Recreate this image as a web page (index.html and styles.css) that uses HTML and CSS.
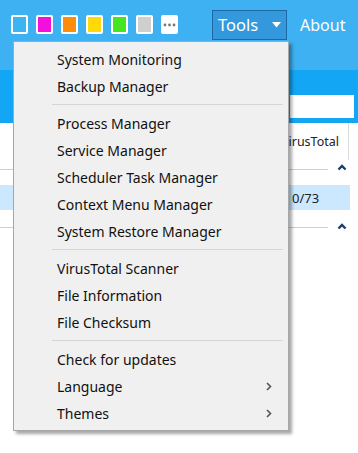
FILE: index.html
```html
<!DOCTYPE html>
<html lang="en">
<head>
  <meta charset="UTF-8">
  <meta name="viewport" content="width=device-width, initial-scale=1.0">
  <title>Tools</title>
  <link rel="stylesheet" href="styles.css">
</head>
<body>

<div class="topbar">
  <div class="swatches">
    <span class="swatch sw-blue"></span>
    <span class="swatch sw-pink"></span>
    <span class="swatch sw-orange"></span>
    <span class="swatch sw-yellow"></span>
    <span class="swatch sw-green"></span>
    <span class="swatch sw-gray"></span>
    <span class="swatch sw-more">
      <svg width="13" height="4" viewBox="0 0 13 4"><circle cx="2" cy="2" r="1.4" fill="#777"/><circle cx="6.5" cy="2" r="1.4" fill="#777"/><circle cx="11" cy="2" r="1.4" fill="#777"/></svg>
    </span>
  </div>
  <div class="nav">
    <div class="tools-btn">
      <span>Tools</span>
      <svg width="9" height="6" viewBox="0 0 9 6"><polygon points="0,0 9,0 4.5,5.5" fill="#fff"/></svg>
    </div>
    <span class="about">About</span>
  </div>
</div>

<div class="searchbar">
  <div class="search-box"></div>
</div>

<div class="table">
  <div class="table-head">
    <div class="col-main"></div>
    <div class="col-vt">VirusTotal</div>
  </div>
  <div class="group group-first">
    <div class="group-line"></div>
    <svg class="caret" width="10" height="7" viewBox="0 0 10 7"><polyline points="1.5,5.5 5,2 8.5,5.5" fill="none" stroke="#1b3d6e" stroke-width="2.4"/></svg>
  </div>
  <div class="row selected">
    <div class="col-main"></div>
    <div class="col-vt">0/73</div>
  </div>
  <div class="group">
    <div class="group-line"></div>
    <svg class="caret" width="10" height="7" viewBox="0 0 10 7"><polyline points="1.5,5.5 5,2 8.5,5.5" fill="none" stroke="#1b3d6e" stroke-width="2.4"/></svg>
  </div>
</div>

<!-- dropdown of the Tools button -->
<div class="menu">
  <div class="menu-item">System Monitoring</div>
  <div class="menu-item">Backup Manager</div>
  <div class="menu-sep"></div>
  <div class="menu-item">Process Manager</div>
  <div class="menu-item">Service Manager</div>
  <div class="menu-item">Scheduler Task Manager</div>
  <div class="menu-item">Context Menu Manager</div>
  <div class="menu-item">System Restore Manager</div>
  <div class="menu-sep"></div>
  <div class="menu-item">VirusTotal Scanner</div>
  <div class="menu-item">File Information</div>
  <div class="menu-item">File Checksum</div>
  <div class="menu-sep"></div>
  <div class="menu-item">Check for updates</div>
  <div class="menu-item">Language
    <svg class="sub" width="6" height="9" viewBox="0 0 6 9"><polyline points="1,1 4.5,4.5 1,8" fill="none" stroke="#555" stroke-width="1.6"/></svg>
  </div>
  <div class="menu-item">Themes
    <svg class="sub" width="6" height="9" viewBox="0 0 6 9"><polyline points="1,1 4.5,4.5 1,8" fill="none" stroke="#555" stroke-width="1.6"/></svg>
  </div>
</div>

</body>
</html>
```

FILE: styles.css
```css
body {
  font-family: 'Noto Sans', 'Open Sans', sans-serif;
  margin: 0;
  padding: 0;
  width: 358px;
  height: 453px;
  overflow: hidden;
  background-color: #ffffff;
  position: relative;
}

/* Top bar */
.topbar {
  height: 70px;
  background-color: #3db1f1;
  display: flex;
  justify-content: space-between;
  box-sizing: border-box;
  padding: 10px 16px 0 11px;
}

.swatches {
  display: flex;
  gap: 8px;
  margin-top: 5px;
}

.swatch {
  width: 17px;
  height: 19px;
  box-sizing: border-box;
  border: 2px solid #ffffff;
  border-radius: 2px;
  display: flex;
  align-items: center;
  justify-content: center;
}

.sw-blue { background-color: #3cb3f2; }
.sw-pink { background-color: #f40fdc; }
.sw-orange { background-color: #ff8c0a; }
.sw-yellow { background-color: #ffd90a; }
.sw-green { background-color: #45e522; }
.sw-gray { background-color: #cfcfcf; }
.sw-more { background-color: #ffffff; }

.nav {
  display: flex;
  align-items: flex-start;
  gap: 13px;
}

.tools-btn {
  width: 75px;
  height: 30px;
  box-sizing: border-box;
  border: 1px solid #1d6aa3;
  background-color: #3399dc;
  color: #ffffff;
  font-size: 16.5px;
  display: flex;
  align-items: center;
  justify-content: space-between;
  padding: 0 5px 1px 5px;
}

.about {
  width: 42px;
  white-space: nowrap;
  color: #ffffff;
  font-size: 16px;
  line-height: 30px;
}

/* Search */
.searchbar {
  height: 53px;
  background-color: #12a6f5;
  display: flex;
  justify-content: flex-end;
  padding-right: 4px;
}

.search-box {
  width: 64px;
  height: 23px;
  margin-top: 25px;
  background-color: #ffffff;
}

/* Table behind the menu */
.table {
  font-size: 12.5px;
  color: #222;
}

.table-head {
  height: 37px;
  display: flex;
}

.table-head .col-vt {
  border-right: 1px solid #d9d9d9;
  line-height: 37px;
  text-align: right;
  padding-right: 10px;
  white-space: nowrap;
}

.col-main {
  flex: 1;
}

.col-vt {
  width: 68px;
  margin-right: 9px;
  box-sizing: border-box;
}

.group {
  height: 17px;
  display: flex;
  align-items: center;
  padding: 0 11px 0 0;
  box-sizing: border-box;
  gap: 9px;
  margin-top: 9px;
}

.group-first {
  margin-top: 2px;
  height: 14px;
  margin-bottom: 9px;
}

.group-line {
  flex: 1;
  border-top: 1px solid #cfcfcf;
}

.caret {
  margin-top: -3px;
}

.row {
  height: 25px;
  display: flex;
  align-items: center;
  font-size: 13px;
}

.row .col-vt {
  padding-left: 11px;
}

.selected {
  background-color: #cce8ff;
  margin-right: 8px;
}

.selected .col-vt {
  margin-right: 1px;
}

/* Dropdown menu */
.menu {
  position: absolute;
  top: 41px;
  left: 13px;
  width: 276px;
  box-sizing: border-box;
  padding: 4px 0 3px 0;
  background-color: #f0f0f0;
  border: 1px solid #a7a7a7;
  box-shadow: 3px 3px 3px rgba(0, 0, 0, 0.35);
  font-size: 14px;
  color: #111;
}

.menu-item {
  height: 27px;
  line-height: 27px;
  padding-left: 43px;
  position: relative;
}

.menu-item .sub {
  position: absolute;
  right: 16px;
  top: 9px;
}

.menu-sep {
  height: 1px;
  margin: 4px 5px 5px 38px;
  background-color: #d5d5d5;
}
```
